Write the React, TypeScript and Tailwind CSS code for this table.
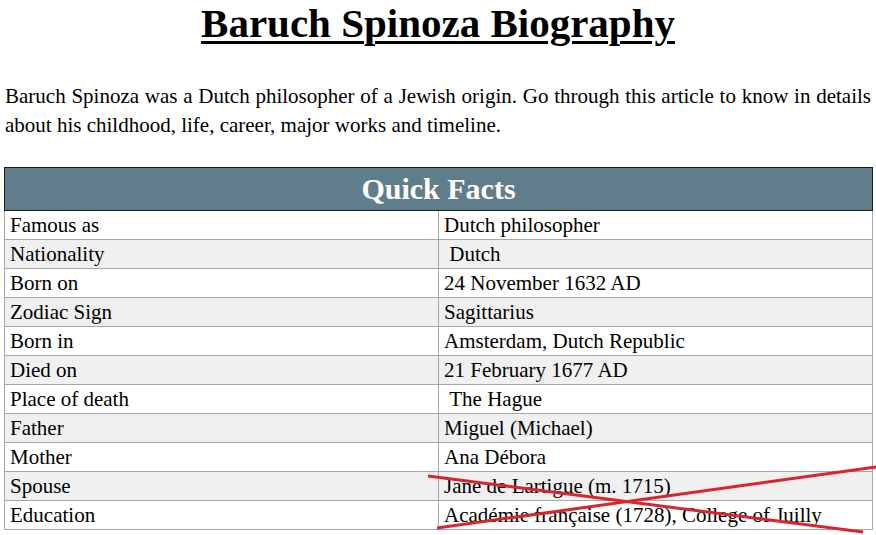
import React from 'react';

const facts: [string, string][] = [
  ['Famous as', 'Dutch philosopher'],
  ['Nationality', '\u00a0Dutch'],
  ['Born on', '24 November 1632 AD'],
  ['Zodiac Sign', 'Sagittarius'],
  ['Born in', 'Amsterdam, Dutch Republic'],
  ['Died on', '21 February 1677 AD'],
  ['Place of death', '\u00a0The Hague'],
  ['Father', 'Miguel (Michael)'],
  ['Mother', 'Ana Débora'],
  ['Spouse', 'Jane de Lartigue (m. 1715)'],
  ['Education', 'Académie française (1728), College of Juilly'],
];

const App: React.FC = () => {
  return (
    <div className="relative w-[876px] h-[535px] bg-white text-black overflow-hidden font-['Liberation_Serif',serif]">
      <h1 className="text-center text-[41px] font-bold leading-[46px] underline decoration-[3px] underline-offset-[4px]">
        Baruch Spinoza Biography
      </h1>

      <p className="mt-[36px] px-[5px] text-[21px] leading-[29px] text-justify">
        Baruch Spinoza was a Dutch philosopher of a Jewish origin. Go through this article to know in details about his
        childhood, life, career, major works and timeline.
      </p>

      <table className="mt-[27px] ml-[4px] w-[869px] border-collapse table-fixed">
        <thead>
          <tr>
            <th
              colSpan={2}
              className="h-[43px] bg-[#607d8b] border border-[#1a1a1a] text-white text-[30px] font-bold text-center leading-none"
            >
              Quick Facts
            </th>
          </tr>
        </thead>
        <tbody>
          {facts.map(([label, value], i) => (
            <tr key={label} className={i % 2 === 1 ? 'bg-[#f0f0f0]' : 'bg-white'}>
              <td className="w-[434px] h-[29px] border border-[#a8a8a8] px-[5px] text-[21px] leading-[27px] align-middle">
                {label}
              </td>
              <td className="h-[29px] border border-[#a8a8a8] px-[5px] text-[21px] leading-[27px] align-middle">
                {value}
              </td>
            </tr>
          ))}
        </tbody>
      </table>

      {/* red cross drawn over the last two rows */}
      <svg className="absolute left-0 top-0 pointer-events-none" width="876" height="535">
        <line x1="428" y1="476" x2="863" y2="532" stroke="#d9262c" strokeWidth="3" />
        <line x1="437" y1="528" x2="876" y2="467" stroke="#d9262c" strokeWidth="3" />
      </svg>
    </div>
  );
};

export default App;
